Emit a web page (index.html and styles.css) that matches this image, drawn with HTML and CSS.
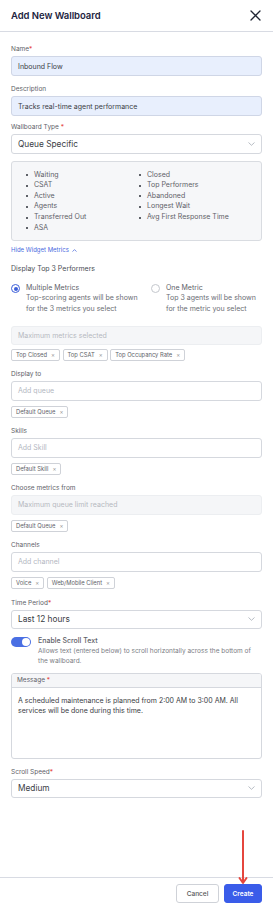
FILE: index.html
```html
<!DOCTYPE html>
<html lang="en">
<head>
<meta charset="utf-8">
<title>Add New Wallboard</title>
<link rel="stylesheet" href="styles.css">
</head>
<body>
<div class="modal">
  <header class="modal-header">
    <h1 class="title">Add New Wallboard</h1>
    <button class="close" aria-label="Close">
      <svg width="11" height="11" viewBox="0 0 11 11"><path d="M1 1 L10 10 M10 1 L1 10" stroke="#1f2433" stroke-width="1.3" stroke-linecap="round"/></svg>
    </button>
  </header>

  <main class="content">
    <div class="field first">
      <label class="label">Name<span class="req">*</span></label>
      <div class="input filled">Inbound Flow</div>
    </div>
    <div class="field f-desc">
      <label class="label">Description</label>
      <div class="input filled">Tracks real-time agent performance</div>
    </div>
    <div class="field f-type">
      <label class="label">Wallboard Type <span class="req">*</span></label>
      <div class="input select big">Queue Specific<svg class="chev" width="7" height="4" viewBox="0 0 7 4"><path d="M0.5 0.5 L3.5 3.3 L6.5 0.5" fill="none" stroke="#9aa0aa" stroke-width="0.7"/></svg></div>
    </div>

    <div class="metrics">
      <ul class="mcol">
        <li>Waiting</li><li>CSAT</li><li>Active</li><li>Agents</li><li>Transferred Out</li><li>ASA</li>
      </ul>
      <ul class="mcol">
        <li>Closed</li><li>Top Performers</li><li>Abandoned</li><li>Longest Wait</li><li>Avg First Response Time</li>
      </ul>
    </div>

    <a class="hide-link">Hide Widget Metrics <svg width="5" height="3" viewBox="0 0 5 3"><path d="M0.5 2.6 L2.5 0.6 L4.5 2.6" fill="none" stroke="#3d5fd9" stroke-width="0.7"/></svg></a>

    <div class="section-title">Display Top 3 Performers</div>

    <div class="radios">
      <div class="radio">
        <span class="dot on"></span>
        <div class="rtext">
          <div class="rname">Multiple Metrics</div>
          <div class="rdesc">Top-scoring agents will be shown<br>for the 3 metrics you select</div>
        </div>
      </div>
      <div class="radio">
        <span class="dot"></span>
        <div class="rtext">
          <div class="rname">One Metric</div>
          <div class="rdesc">Top 3 agents will be shown<br>for the metric you select</div>
        </div>
      </div>
    </div>

    <div class="input disabled d-metrics">Maximum metrics selected</div>
    <div class="tags">
      <span class="tag">Top Closed<i>×</i></span>
      <span class="tag">Top CSAT<i>×</i></span>
      <span class="tag">Top Occupancy Rate<i>×</i></span>
    </div>

    <div class="field group">
      <label class="label">Display to</label>
      <div class="input placeholder">Add queue</div>
      <div class="tags"><span class="tag">Default Queue<i>×</i></span></div>
    </div>
    <div class="field group">
      <label class="label">Skills</label>
      <div class="input placeholder">Add Skill</div>
      <div class="tags"><span class="tag">Default Skill<i>×</i></span></div>
    </div>
    <div class="field group">
      <label class="label">Choose metrics from</label>
      <div class="input disabled">Maximum queue limit reached</div>
      <div class="tags"><span class="tag">Default Queue<i>×</i></span></div>
    </div>
    <div class="field group">
      <label class="label">Channels</label>
      <div class="input placeholder">Add channel</div>
      <div class="tags"><span class="tag">Voice<i>×</i></span><span class="tag">Web/Mobile Client<i>×</i></span></div>
    </div>
    <div class="field group g-time">
      <label class="label">Time Period<span class="req">*</span></label>
      <div class="input select big">Last 12 hours<svg class="chev" width="7" height="4" viewBox="0 0 7 4"><path d="M0.5 0.5 L3.5 3.3 L6.5 0.5" fill="none" stroke="#9aa0aa" stroke-width="0.7"/></svg></div>
    </div>

    <div class="toggle-row">
      <span class="toggle"><span class="knob"></span></span>
      <div class="ttext">
        <div class="tname">Enable Scroll Text</div>
        <div class="tdesc">Allows text (entered below) to scroll horizontally across the bottom of the wallboard.</div>
      </div>
    </div>

    <div class="message">
      <div class="mhead">Message <span class="req">*</span></div>
      <div class="mbody">A scheduled maintenance is planned from 2:00 AM to 3:00 AM. All services will be done during this time.</div>
    </div>

    <div class="field f-speed">
      <label class="label">Scroll Speed<span class="req">*</span></label>
      <div class="input select big">Medium<svg class="chev" width="7" height="4" viewBox="0 0 7 4"><path d="M0.5 0.5 L3.5 3.3 L6.5 0.5" fill="none" stroke="#9aa0aa" stroke-width="0.7"/></svg></div>
    </div>
  </main>

  <footer class="modal-footer">
    <button class="btn cancel">Cancel</button>
    <button class="btn create">Create</button>
  </footer>

  <svg class="annot-arrow" width="12" height="56" viewBox="0 0 12 56">
    <path d="M6 1 L6 52" stroke="#e5463d" stroke-width="2" stroke-linecap="round"/>
    <path d="M2.5 48 L6 53 L9.5 48" fill="none" stroke="#e5463d" stroke-width="2" stroke-linecap="round" stroke-linejoin="round"/>
  </svg>
</div>
</body>
</html>
```

FILE: styles.css
```css
* { box-sizing: border-box; }
html, body { margin: 0; padding: 0; }
body {
  width: 273px;
  height: 910px;
  overflow: hidden;
  background: #fff;
  font-family: Inter, "Noto Sans", "Liberation Sans", sans-serif;
  color: #444;
}
.modal {
  position: relative;
  height: 910px;
  display: flex;
  flex-direction: column;
  background: #fff;
}
.modal-header {
  height: 32px;
  flex: none;
  display: flex;
  align-items: center;
  justify-content: space-between;
  padding: 0 12px 1px 11px;
  border-bottom: 1px solid #d8dbe3;
}
.title {
  margin: 0;
  font-size: 9.5px;
  font-weight: 600;
  color: #1c2340;
  letter-spacing: -0.05px;
}
.close {
  border: 0;
  background: none;
  padding: 0;
  width: 11px;
  height: 11px;
  display: flex;
}
.content {
  flex: 1;
  overflow: hidden;
  padding: 13px 11px 0 11px;
}
.field { display: flex; flex-direction: column; }
.f-desc { margin-top: 9px; }
.f-type { margin-top: 7px; }
.label {
  font-size: 6.5px;
  line-height: 9px;
  height: 9px;
  margin-bottom: 2px;
  color: #5e6168;
}
.req { color: #e5463d; }
.input {
  height: 20px;
  border: 1px solid #d5d8de;
  border-radius: 3px;
  display: flex;
  align-items: center;
  padding: 0 6px;
  font-size: 7px;
  color: #3a3d44;
  background: #fff;
}
.input.filled {
  background: #e8effd;
  border-color: #cfd6e6;
}
.input.big { font-size: 8.3px; }
.input.select { justify-content: space-between; padding-right: 6px; }
.chev { flex: none; }
.input.placeholder { color: #b3b7bf; }
.input.disabled {
  background: #f5f6f8;
  border-color: #eceef1;
  color: #b5b9c0;
}
.metrics {
  margin-top: 7px;
  height: 80px;
  border: 1px solid #d9dce1;
  border-radius: 3px;
  background: #f6f7f9;
  display: grid;
  grid-template-columns: 113px 1fr;
  padding: 7.7px 0 0 14px;
}
.mcol {
  list-style: none;
  margin: 0;
  padding: 0;
}
.mcol li {
  position: relative;
  font-size: 7px;
  line-height: 10.6px;
  padding-left: 8px;
  color: #5e6168;
  white-space: nowrap;
}
.mcol li::before {
  content: "";
  position: absolute;
  left: 0;
  top: 4.5px;
  width: 2px;
  height: 2px;
  background: #5e6168;
}
.hide-link {
  display: flex;
  align-items: center;
  gap: 3px;
  margin-top: 5px;
  height: 8px;
  font-size: 6px;
  line-height: 8px;
  color: #4a6ae0;
}
.section-title {
  margin-top: 10px;
  font-size: 7px;
  line-height: 9px;
  color: #4a4d54;
}
.radios {
  margin-top: 10px;
  display: grid;
  grid-template-columns: 140px 1fr;
}
.radio { display: flex; gap: 6px; }
.dot {
  flex: none;
  width: 9px;
  height: 9px;
  margin-top: 1px;
  border-radius: 50%;
  border: 1px solid #c4c7cd;
  background: #fff;
  position: relative;
}
.dot.on { border: 1.2px solid #3d5fd9; }
.dot.on::after {
  content: "";
  position: absolute;
  left: 50%;
  top: 50%;
  width: 4px;
  height: 4px;
  margin: -2px 0 0 -2px;
  border-radius: 50%;
  background: #3d5fd9;
}
.rtext { font-size: 7px; line-height: 10.3px; white-space: nowrap; }
.rname { color: #5e6168; }
.rdesc { color: #6a6d74; }
.d-metrics { margin-top: 12px; height: 19px; }
.tags {
  margin-top: 5px;
  display: flex;
  gap: 2.5px;
}
.d-metrics + .tags { margin-top: 4px; }
.tag {
  height: 12px;
  display: inline-flex;
  align-items: center;
  padding: 0 4px;
  border: 1px solid #cfd2d8;
  border-radius: 2px;
  font-size: 5.8px;
  color: #5e6168;
  white-space: nowrap;
}
.tag i {
  font-style: normal;
  color: #999;
  margin-left: 4px;
  font-size: 6px;
}
.group { margin-top: 9px; }
.g-time { margin-top: 10px; }
.g-time .input { height: 19px; }
.toggle-row {
  margin-top: 7px;
  display: flex;
  gap: 7px;
}
.toggle {
  flex: none;
  width: 20px;
  height: 10px;
  margin-top: 1px;
  border-radius: 5px;
  background: #4a6fe3;
  display: flex;
  justify-content: flex-end;
  align-items: center;
  padding: 1px;
}
.knob {
  width: 8px;
  height: 8px;
  border-radius: 50%;
  background: #fff;
}
.ttext { line-height: 10px; }
.tname { font-size: 7px; font-weight: 500; color: #5e6168; }
.tdesc { font-size: 6.5px; color: #7a7d84; }
.message {
  margin-top: 7px;
  height: 86px;
  border: 1px solid #d5d8de;
  border-radius: 3px;
  overflow: hidden;
}
.mhead {
  height: 14px;
  background: #f5f6f8;
  border-bottom: 1px solid #d5d8de;
  font-size: 6.5px;
  line-height: 13px;
  padding-left: 5px;
  color: #5e6168;
}
.mbody {
  padding: 8px 6px 0 6px;
  font-size: 7px;
  line-height: 10px;
  color: #3a3d44;
}
.f-speed { margin-top: 9px; }
.f-speed .input { height: 19px; }
.modal-footer {
  flex: none;
  height: 33px;
  border-top: 1px solid #d8dbe3;
  display: flex;
  justify-content: flex-end;
  align-items: flex-start;
  gap: 5px;
  padding: 6px 11px 0 0;
}
.btn {
  height: 19px;
  border-radius: 3px;
  font-family: inherit;
  font-size: 6.5px;
  padding: 0;
}
.cancel {
  width: 43px;
  background: #fff;
  border: 1px solid #cfd2d8;
  color: #555;
  font-weight: 500;
}
.create {
  width: 38px;
  background: #3a5ce9;
  border: 1px solid #3a5ce9;
  color: #fff;
  font-weight: 600;
}
.annot-arrow {
  position: absolute;
  left: 237px;
  top: 830px;
}
```
